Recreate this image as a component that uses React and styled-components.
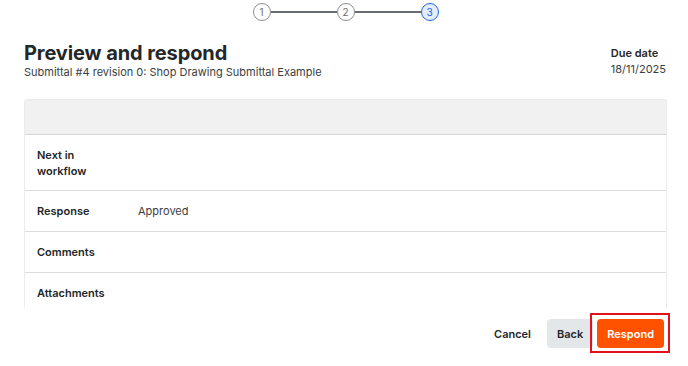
import React from "react";
import styled, { createGlobalStyle } from "styled-components";

const GlobalStyle = createGlobalStyle`
  body {
    margin: 0;
    background: #fff;
    font-family: Inter, "Noto Sans", sans-serif;
    color: #232729;
  }
`;

const Page = styled.div`
  width: 688px;
  height: 366px;
  padding: 3px 21px 0 24px;
  box-sizing: border-box;
  overflow: hidden;
`;

const Stepper = styled.div`
  display: flex;
  align-items: center;
  justify-content: center;
`;

const Step = styled.div`
  width: 16px;
  height: 16px;
  border-radius: 50%;
  border: 1.5px solid ${(p) => (p.$active ? "#2066df" : "#8a8d8f")};
  background: ${(p) => (p.$active ? "#e3edfd" : "#fff")};
  color: ${(p) => (p.$active ? "#2066df" : "#6a6d70")};
  font-size: 10px;
  display: flex;
  align-items: center;
  justify-content: center;
  flex-shrink: 0;
`;

const Connector = styled.div`
  width: 66px;
  height: 2px;
  background: #6a6d70;
`;

const Header = styled.div`
  display: flex;
  justify-content: space-between;
  align-items: flex-start;
  margin-top: 20px;
  padding-right: 1px;
`;

const Title = styled.h1`
  margin: 0;
  font-size: 20px;
  font-weight: 700;
  line-height: 24px;
  letter-spacing: -0.1px;
`;

const Subtitle = styled.div`
  font-size: 11px;
  line-height: 14px;
  color: #3a3e41;
`;

const Due = styled.div`
  display: flex;
  flex-direction: column;
  margin-top: 4px;
`;

const DueLabel = styled.div`
  font-size: 11px;
  font-weight: 600;
  line-height: 16px;
`;

const DueValue = styled.div`
  font-size: 11px;
  line-height: 16px;
  color: #3a3e41;
`;

const TableWrap = styled.div`
  margin-top: 20px;
  height: 208px;
  overflow: hidden;
  border: 1px solid #ececec;
  border-bottom: none;
  border-radius: 3px 3px 0 0;
`;

const TableHead = styled.div`
  height: 34px;
  background: #f1f1f1;
  border-bottom: 1px solid #d6d6d6;
`;

const Row = styled.div`
  display: grid;
  grid-template-columns: 101px 1fr;
  align-items: center;
  min-height: ${(p) => p.$h}px;
  padding-left: 12px;
  border-bottom: 1px solid #dcdcdc;
  box-sizing: border-box;
  font-size: 11px;
  line-height: 16px;
`;

const Label = styled.div`
  font-weight: 600;
  width: 60px;
`;

const Value = styled.div`
  color: #3a3e41;
`;

const Footer = styled.div`
  display: flex;
  justify-content: flex-end;
  align-items: center;
  gap: 4px;
  margin-top: 11px;
  padding-right: 3px;
`;

const Button = styled.button`
  font-family: inherit;
  font-size: 11px;
  font-weight: 600;
  height: 29px;
  border: none;
  border-radius: 4px;
  padding: 0 ${(p) => p.$px}px;
  cursor: pointer;
  background: ${(p) => p.$bg};
  color: ${(p) => p.$fg};
`;

const Highlight = styled.div`
  position: relative;
  display: flex;

  &::after {
    content: "";
    position: absolute;
    inset: -6px -6px -5px -7px;
    border: 2px solid #e3101e;
    pointer-events: none;
  }
`;

const rows = [
  { label: "Next in workflow", value: "", h: 56 },
  { label: "Response", value: "Approved", h: 41 },
  { label: "Comments", value: "", h: 41 },
  { label: "Attachments", value: "", h: 41 },
];

export default function App() {
  return (
    <>
      <GlobalStyle />
      <Page>
        <Stepper>
          <Step>1</Step>
          <Connector />
          <Step>2</Step>
          <Connector />
          <Step $active>3</Step>
        </Stepper>
        <Header>
          <div>
            <Title>Preview and respond</Title>
            <Subtitle>Submittal #4 revision 0: Shop Drawing Submittal Example</Subtitle>
          </div>
          <Due>
            <DueLabel>Due date</DueLabel>
            <DueValue>18/11/2025</DueValue>
          </Due>
        </Header>
        <TableWrap>
          <TableHead />
          {rows.map((r) => (
            <Row key={r.label} $h={r.h}>
              <Label>{r.label}</Label>
              <Value>{r.value}</Value>
            </Row>
          ))}
        </TableWrap>
        <Footer>
          <Button $px={12} $bg="transparent" $fg="#232729">Cancel</Button>
          <Button $px={10} $bg="#e4e7ea" $fg="#232729">Back</Button>
          <Highlight>
            <Button $px={10} $bg="#ff5200" $fg="#fff">Respond</Button>
          </Highlight>
        </Footer>
      </Page>
    </>
  );
}
